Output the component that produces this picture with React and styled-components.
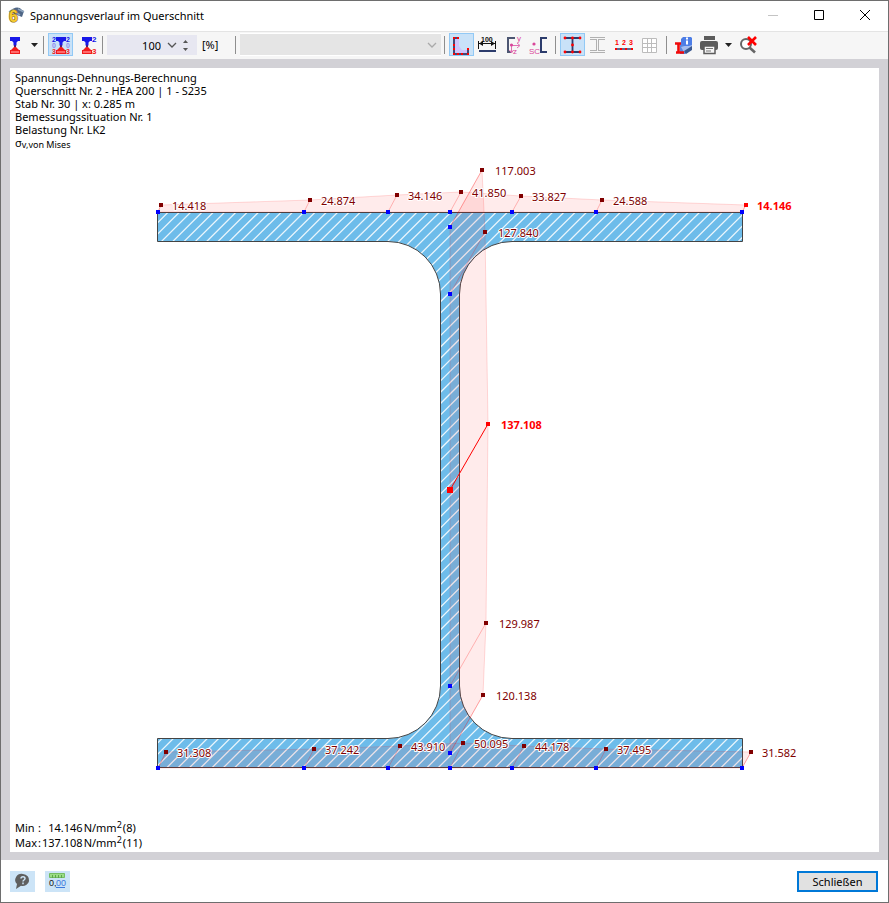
import React, { useState } from "react";
import styled, { createGlobalStyle } from "styled-components";

const topPoints = [
  { node: [158, 212], tip: [161, 205], value: "14.418", text: [172, 210] },
  { node: [304, 212], tip: [310, 200], value: "24.874", text: [321, 205] },
  { node: [388, 212], tip: [397, 195], value: "34.146", text: [408, 200] },
  { node: [450, 212], tip: [461, 192], value: "41.850", text: [472, 197] },
  { node: [512, 212], tip: [521, 196], value: "33.827", text: [532, 201] },
  { node: [596, 212], tip: [602, 200], value: "24.588", text: [613, 205] },
  {
    node: [742, 212],
    tip: [746, 205],
    value: "14.146",
    text: [757, 210],
    extreme: true,
  },
];

const webPoints = [
  { node: [450, 227], tip: [482, 170], value: "117.003", text: [495, 175] },
  { node: [450, 294], tip: [485, 232], value: "127.840", text: [498, 237] },
  {
    node: [450, 490],
    tip: [488, 424],
    value: "137.108",
    text: [501, 429],
    extreme: true,
    governing: true,
  },
  { node: [450, 686], tip: [486, 623], value: "129.987", text: [499, 628] },
  { node: [450, 753], tip: [483, 695], value: "120.138", text: [496, 700] },
];

const bottomPoints = [
  { node: [158, 768], tip: [166, 752], value: "31.308", text: [177, 757] },
  { node: [304, 768], tip: [314, 749], value: "37.242", text: [325, 754] },
  { node: [388, 768], tip: [400, 746], value: "43.910", text: [411, 751] },
  { node: [450, 768], tip: [463, 743], value: "50.095", text: [474, 748] },
  { node: [512, 768], tip: [524, 746], value: "44.178", text: [535, 751] },
  { node: [596, 768], tip: [606, 749], value: "37.495", text: [617, 754] },
  { node: [742, 768], tip: [751, 752], value: "31.582", text: [762, 757] },
];

const groups = [topPoints, webPoints, bottomPoints];
const allPoints = groups.flat();

const outline =
  "M157.5 212.5H742.5V241.5H512A52.5 52.5 0 0 0 459.5 294V686A52.5 52.5 0 0 0 512 738.5H742.5V767.5H157.5V738.5H388A52.5 52.5 0 0 0 440.5 686V294A52.5 52.5 0 0 0 388 241.5H157.5Z";

// every hatch line runs at 45 degrees, so x + y is constant along it
function hatchPath() {
  const step = 11.31;
  const lines = [];
  for (let sum = 369; sum < 1520; sum += step) {
    lines.push(`M${sum - 212} 212L${sum - 768} 768`);
  }
  return lines.join("");
}

const hatch = hatchPath();

function areaPath(points) {
  const tips = points.map((p) => p.tip.join(" "));
  const first = points[0].node.join(" ");
  const last = points[points.length - 1].node.join(" ");
  return `M${first}L${tips.join("L")}L${last}Z`;
}

function StressDiagram() {
  return (
    <Drawing
      viewBox="10 155 869 660"
      role="img"
      aria-label="Spannungsverlauf HEA 200"
    >
      <clipPath id="section">
        <path d={outline} />
      </clipPath>
      <path d={outline} fill="#6dbcea" />
      <path
        d={hatch}
        clipPath="url(#section)"
        stroke="#fff"
        strokeOpacity="0.85"
        strokeWidth="1.3"
      />
      <path d={outline} fill="none" stroke="#444" />
      {groups.map((points) => (
        <StressArea key={points[0].value} d={areaPath(points)} />
      ))}
      {allPoints.map((p) => (
        <Leader
          key={p.value}
          $governing={p.governing}
          d={`M${p.node.join(" ")}L${p.tip.join(" ")}`}
        />
      ))}
      {allPoints.map((p) => {
        const size = p.governing ? 6 : 4;
        return (
          <g key={p.value}>
            <rect
              x={p.node[0] - size / 2}
              y={p.node[1] - size / 2}
              width={size}
              height={size}
              fill={p.governing ? "#f00" : "#00f"}
            />
            <rect
              x={p.tip[0] - 2}
              y={p.tip[1] - 2}
              width="4"
              height="4"
              fill={p.extreme ? "#f00" : "#800000"}
            />
            <ValueLabel x={p.text[0]} y={p.text[1]} $extreme={p.extreme}>
              {p.value}
            </ValueLabel>
          </g>
        );
      })}
    </Drawing>
  );
}

function Icon({ children }) {
  return (
    <svg width="25" height="23" viewBox="0 0 25 23" aria-hidden="true">
      {children}
    </svg>
  );
}

function BeamShape({ x = 0 }) {
  return (
    <g transform={`translate(${x} 0)`}>
      <path d="M7 4h10v4h-2l-1.500 1.500v3h-3v-3L9 8H7z" fill="#1818e8" />
      <path d="M11 12h2v4h-2z" fill="#4b1f78" />
      <path d="M11 14h2l3 3h1v4H7v-4h1z" fill="#f01c1c" />
      <path d="M8 18h8v2H8z" fill="#ff6a6a" />
    </g>
  );
}

function SectionIcon() {
  return (
    <Icon>
      <BeamShape />
    </Icon>
  );
}

function AllStressIcon() {
  return (
    <Icon>
      <BeamShape x={1} />
      <IconText x="4" y="9" fill="#1414e6" $small>2</IconText>
      <IconText x="18" y="9" fill="#1414e6" $small>2</IconText>
      <IconText x="4" y="15" fill="#8f8fee" $small>0</IconText>
      <IconText x="18" y="15" fill="#8f8fee" $small>0</IconText>
      <IconText x="4" y="21" fill="#f22020" $small>3</IconText>
      <IconText x="18" y="21" fill="#f22020" $small>3</IconText>
    </Icon>
  );
}

function EndStressIcon() {
  return (
    <Icon>
      <BeamShape x={1} />
      <IconText x="18" y="9" fill="#1414e6">2</IconText>
      <IconText x="18" y="21" fill="#f22020">3</IconText>
    </Icon>
  );
}

function AngleIcon() {
  return (
    <Icon>
      <path d="M6 5h4v8l3 4h6v3H6z" fill="#cfc4fb" />
      <path d="M9 5H5v16h14v-5" fill="none" stroke="#454874" strokeWidth="2" />
      <path
        d="M4 4h2v2H4zM8 4h2v2H8zM4 11h2v2H4zM4 15h2v2H4zM4 20h2v2H4zM8 20h2v2H8zM12 20h2v2h-2zM18 20h2v2h-2zM18 15h2v2h-2z"
        fill="#f00"
      />
    </Icon>
  );
}

function DimensionIcon() {
  return (
    <Icon>
      <IconText x="6" y="9" fill="#111" $small>100</IconText>
      <path d="M3.500 8v8M20.500 8v8M4 10.500h16" stroke="#111" />
      <path d="M4 10.500l4-2.500v5zM20 10.500L16 8v5z" fill="#111" />
      <path d="M4 17h17v2H4z" fill="#2c3c6c" />
    </Icon>
  );
}

function AxesIcon() {
  return (
    <Icon>
      <path d="M14 5H7v14h3" fill="none" stroke="#4c5672" strokeWidth="2" />
      <path d="M10.500 12.500h8M10.500 12.500v7" fill="none" stroke="#e070b4" />
      <circle cx="10.500" cy="12" r="1.600" fill="#d9479a" />
      <path d="M16 10l3 2.500-3 2.500M8.500 17l2 3 2-3" fill="none" stroke="#e070b4" />
      <IconText x="16" y="8" fill="#d9479a" $light>y</IconText>
      <IconText x="12" y="21" fill="#d9479a" $light>z</IconText>
    </Icon>
  );
}

function ShearCentreIcon() {
  return (
    <Icon>
      <path d="M20 5h-6v14h6" fill="none" stroke="#2c3c6c" strokeWidth="2" />
      <circle cx="7" cy="11" r="1.600" fill="#d9479a" />
      <IconText x="2" y="21" fill="#d9479a" $light>SC</IconText>
    </Icon>
  );
}

function NodesIcon() {
  const dots = [
    [5, 5],
    [12.5, 5],
    [20, 5],
    [12.5, 12],
    [5, 19],
    [12.5, 19],
    [20, 19],
  ];
  return (
    <Icon>
      <path d="M5 5h15M5 19h15M12.500 5v14" stroke="#2c3c6c" strokeWidth="1.800" />
      {dots.map(([x, y]) => (
        <circle key={`${x}-${y}`} cx={x} cy={y} r="1.400" fill="#f00" />
      ))}
    </Icon>
  );
}

function OutlineIcon() {
  return (
    <Icon>
      <path
        d="M4 4.500h15M4 6.500h6M13 6.500h6M4 19.500h15M4 17.500h6M13 17.500h6M10.500 6v12M12.500 6v12"
        stroke="#a0a0a0"
        strokeWidth=".8"
        fill="none"
      />
    </Icon>
  );
}

function NumberingIcon() {
  return (
    <Icon>
      <IconText x="3" y="12" fill="#f00" $small>1</IconText>
      <IconText x="10" y="12" fill="#f00" $small>2</IconText>
      <IconText x="17" y="12" fill="#f00" $small>3</IconText>
      <path d="M4 16h17" stroke="#2c3c6c" strokeWidth="1.500" />
      <path d="M3 15h2v2H3zM8 15h2v2H8zM13 15h2v2h-2zM19 15h2v2h-2z" fill="#f00" />
    </Icon>
  );
}

function GridIcon() {
  return (
    <Icon>
      <path
        d="M4.500 5.500h14v14h-14zM4.500 10.500h14M4.500 14.500h14M9.500 5.500v14M13.500 5.500v14"
        fill="#fff"
        stroke="#bcbcbc"
      />
    </Icon>
  );
}

function InfoIcon() {
  return (
    <Icon>
      <path d="M9 10l12-5v11l-7 5H9z" fill="#5b85dc" />
      <path d="M10 14l11-3v4l-8 4z" fill="#a5bdf0" />
      <path d="M13 18l8-5v4l-6 4z" fill="#39588f" />
      <path d="M12 4h8l1 1v7l-3 1h-5l-3-3V6z" fill="#4c7de6" />
      <path d="M15 4.500h2v2h-2zM15 7.500h2v4h-2z" fill="#fff" />
      <path d="M4 10.500h6M5 19.500h8M7.500 10v9" stroke="#f00a0a" strokeWidth="2.600" />
    </Icon>
  );
}

function PrintIcon() {
  return (
    <Icon>
      <path d="M7 3h11v4H7z" fill="#5c5c5c" />
      <rect x="3" y="8" width="18" height="9" rx="2" fill="#5c5c5c" />
      <path d="M7 13h11v7.500H7z" fill="#f6f6f6" stroke="#5c5c5c" strokeWidth="1.500" />
      <path d="M9 15.500h7M9 18h5" stroke="#777" />
    </Icon>
  );
}

function ResetZoomIcon() {
  return (
    <Icon>
      <circle cx="11" cy="11" r="5" fill="#fff" stroke="#666" strokeWidth="2" />
      <path d="M14.500 14.500l5.500 5" stroke="#666" strokeWidth="2.600" />
      <path d="M13 4l8 8M21 4l-8 8" stroke="#f00" strokeWidth="2.600" />
    </Icon>
  );
}

function AppIcon() {
  return (
    <svg width="17" height="17" viewBox="0 0 17 17" aria-hidden="true">
      <path d="M2 5C5 0 11-1 14 3l2 1-2 6-5-2z" fill="#4f6686" />
      <path d="M1 5l5-3M10 2l6 3M7 5l5 3" stroke="#8da4bd" strokeWidth="1.500" />
      <LogoText x="1" y="15">
        6
      </LogoText>
    </svg>
  );
}

function Arrow() {
  return (
    <svg width="7" height="4" viewBox="0 0 7 4" aria-hidden="true">
      <path d="M0 0h7L3.500 4z" fill="#222" />
    </svg>
  );
}

function Chevron({ color }) {
  return (
    <svg width="10" height="6" viewBox="0 0 10 6" aria-hidden="true">
      <path d="M1 1l4 4 4-4" fill="none" stroke={color} strokeWidth="1.300" />
    </svg>
  );
}

function Tool({ label, active, onClick, children }) {
  return (
    <ToolButton
      type="button"
      aria-label={label}
      aria-pressed={active}
      $active={active}
      onClick={onClick}
    >
      {children}
    </ToolButton>
  );
}

function TitleBar() {
  return (
    <Header>
      <AppIcon />
      <Title>Spannungsverlauf im Querschnitt</Title>
      <WindowButton type="button" aria-label="Minimieren" disabled>
        <svg width="10" height="10" viewBox="0 0 10 10">
          <path d="M0 5.500h10" stroke="#c4c4c4" />
        </svg>
      </WindowButton>
      <WindowButton type="button" aria-label="Maximieren">
        <svg width="10" height="10" viewBox="0 0 10 10">
          <path d="M.5 .5h9v9h-9z" fill="none" stroke="#000" />
        </svg>
      </WindowButton>
      <WindowButton type="button" aria-label="Fenster schließen">
        <svg width="10" height="10" viewBox="0 0 10 10">
          <path d="M0 0l10 10M10 0L0 10" stroke="#000" />
        </svg>
      </WindowButton>
    </Header>
  );
}

function Toolbar() {
  const [scale, setScale] = useState(100);
  const [on, setOn] = useState({ all: true, angle: true, nodes: true });
  const toggle = (key) => setOn({ ...on, [key]: !on[key] });

  return (
    <Bar role="toolbar">
      <SplitTool>
        <Tool label="Querschnitt">
          <SectionIcon />
        </Tool>
        <ArrowButton type="button" aria-label="Querschnitt wählen">
          <Arrow />
        </ArrowButton>
      </SplitTool>
      <Separator />
      <Tool label="Alle Werte" active={on.all} onClick={() => toggle("all")}>
        <AllStressIcon />
      </Tool>
      <Tool label="Randwerte">
        <EndStressIcon />
      </Tool>
      <Separator />
      <SpinBox>
        <SpinInput
          aria-label="Skalierung"
          value={scale}
          onChange={(e) => setScale(Number(e.target.value) || 0)}
        />
        <SpinButton type="button" aria-label="Skalierung wählen">
          <Chevron color="#555" />
        </SpinButton>
        <SpinSteps>
          <StepButton
            type="button"
            aria-label="Mehr"
            onClick={() => setScale(scale + 1)}
          >
            <svg width="5" height="3" viewBox="0 0 5 3">
              <path d="M0 3h5L2.500 0z" fill="#555" />
            </svg>
          </StepButton>
          <StepButton
            type="button"
            aria-label="Weniger"
            onClick={() => setScale(scale - 1)}
          >
            <svg width="5" height="3" viewBox="0 0 5 3">
              <path d="M0 0h5L2.500 3z" fill="#555" />
            </svg>
          </StepButton>
        </SpinSteps>
      </SpinBox>
      <Unit>[%]</Unit>
      <Separator />
      <ComboBox>
        <Combo aria-label="Auswahl" disabled />
        <ComboArrow>
          <Chevron color="#aaa" />
        </ComboArrow>
      </ComboBox>
      <Separator />
      <Tool label="Verlauf" active={on.angle} onClick={() => toggle("angle")}>
        <AngleIcon />
      </Tool>
      <Tool label="Bemaßung">
        <DimensionIcon />
      </Tool>
      <Tool label="Hauptachsen">
        <AxesIcon />
      </Tool>
      <Tool label="Schubmittelpunkt">
        <ShearCentreIcon />
      </Tool>
      <Separator />
      <Tool
        label="Spannungspunkte"
        active={on.nodes}
        onClick={() => toggle("nodes")}
      >
        <NodesIcon />
      </Tool>
      <Tool label="Umriss">
        <OutlineIcon />
      </Tool>
      <Tool label="Nummerierung">
        <NumberingIcon />
      </Tool>
      <Tool label="Raster">
        <GridIcon />
      </Tool>
      <Separator />
      <Tool label="Querschnittswerte">
        <InfoIcon />
      </Tool>
      <SplitTool>
        <Tool label="Drucken">
          <PrintIcon />
        </Tool>
        <ArrowButton type="button" aria-label="Druckoptionen">
          <Arrow />
        </ArrowButton>
      </SplitTool>
      <Tool label="Ansicht zurücksetzen">
        <ResetZoomIcon />
      </Tool>
    </Bar>
  );
}

function ResultRow({ name, value, point }) {
  return (
    <tr>
      <th scope="row">{name}</th>
      <td>:</td>
      <Value>{value}</Value>
      <td>
        N/mm<sup>2</sup>
      </td>
      <td>({point})</td>
    </tr>
  );
}

export default function App() {
  return (
    <>
      <GlobalStyle />
      <Window>
        <TitleBar />
        <Toolbar />
        <Frame>
          <Paper>
            <Notes>
              <div>Spannungs-Dehnungs-Berechnung</div>
              <div>Querschnitt Nr. 2 - HEA 200 | 1 - S235</div>
              <div>Stab Nr. 30 | x: 0.285 m</div>
              <div>Bemessungssituation Nr. 1</div>
              <div>Belastung Nr. LK2</div>
              <div>
                σ<Index>v,von Mises</Index>
              </div>
            </Notes>
            <StressDiagram />
            <Results>
              <tbody>
                <ResultRow name="Min" value="14.146" point="8" />
                <ResultRow name="Max" value="137.108" point="11" />
              </tbody>
            </Results>
          </Paper>
        </Frame>
        <Footer>
          <FooterTool type="button" aria-label="Hilfe">
            <Icon>
              <path
                d="M13 3a6.500 6 0 1 1-2 11.800L6 18l1-5A6.500 6 0 0 1 13 3z"
                fill="#5f5f5f"
              />
              <path
                d="M11 7.500c0-2.500 4-2.500 4 0 0 1.500-2 1.500-2 3M13 11.500v1.800"
                fill="none"
                stroke="#cce4f7"
                strokeWidth="1.500"
              />
            </Icon>
          </FooterTool>
          <FooterTool type="button" aria-label="Einheiten">
            <Icon>
              <path d="M4.500 2.500h15v4h-15z" fill="#9bdc86" stroke="#74bd62" />
              <path d="M7.500 4v3M10.500 4v3M13.500 4v3M16.500 4v3" stroke="#5da64c" />
              <DigitText x="4" y="15" fill="#111">0,</DigitText>
              <DigitText x="11" y="15" fill="#3c78dc">00</DigitText>
              <path d="M11 16.500h9" stroke="#3c78dc" />
            </Icon>
          </FooterTool>
          <CloseButton type="button">Schließen</CloseButton>
        </Footer>
      </Window>
    </>
  );
}

const GlobalStyle = createGlobalStyle`
  * {
    box-sizing: border-box;
  }

  body {
    margin: 0;
    background: #fff;
    color: #000;
    font-family: "Noto Sans", "Open Sans", sans-serif;
    font-size: 11px;
  }

  button,
  input,
  select {
    margin: 0;
    padding: 0;
    border: 0;
    background: none;
    color: inherit;
    font: inherit;
  }
`;

const Window = styled.div`
  display: flex;
  flex-direction: column;
  height: 100vh;
  min-height: 480px;
  border: 1px solid #6e6e6e;
`;

const Header = styled.header`
  display: flex;
  align-items: center;
  height: 31px;
  padding: 0 0 2px 7px;
  border-bottom: 1px solid #e4e4e4;
`;

const Title = styled.h1`
  flex: 1;
  margin: 0 0 0 5px;
  font-size: 11px;
  font-weight: 400;
`;

const WindowButton = styled.button`
  display: flex;
  align-items: center;
  justify-content: center;
  width: 46px;
  height: 28px;
`;

const Bar = styled.div`
  display: flex;
  align-items: flex-start;
  gap: 1px;
  height: 27px;
  padding: 1px 2px;
  background: #f6f6f6;
`;

const ToolButton = styled.button`
  flex: none;
  width: 25px;
  height: 23px;
  background: ${(props) => (props.$active ? "#c9e2f8" : "transparent")};
  box-shadow: ${(props) =>
    props.$active ? "inset 0 0 0 1px #92c9f5" : "none"};

  svg {
    display: block;
  }
`;

const SplitTool = styled.div`
  display: flex;
`;

const ArrowButton = styled.button`
  display: flex;
  align-items: center;
  justify-content: center;
  width: 12px;
  height: 23px;
`;

const Separator = styled.div`
  flex: none;
  width: 1px;
  height: 18px;
  margin: 3px 3px 0 2px;
  background: #8e8e8e;
`;

const SpinBox = styled.div`
  display: flex;
  flex: none;
  width: 90px;
  height: 20px;
  margin-top: 2px;
  background: #e7e7f1;
`;

const SpinInput = styled.input`
  flex: 1;
  min-width: 0;
  text-align: right;
`;

const SpinButton = styled.button`
  display: flex;
  align-items: center;
  justify-content: center;
  width: 22px;
`;

const SpinSteps = styled.div`
  display: flex;
  flex-direction: column;
  justify-content: center;
  width: 14px;
`;

const StepButton = styled.button`
  display: flex;
  align-items: center;
  height: 8px;
`;

const Unit = styled.span`
  flex: none;
  width: 34px;
  padding-left: 4px;
  line-height: 23px;
`;

const ComboBox = styled.div`
  display: grid;
  flex: 0 1 201px;
  height: 23px;
  border: solid #fff;
  border-width: 1px 0;
`;

const Combo = styled.select`
  grid-area: 1 / 1;
  appearance: none;
  width: 100%;
  background: #e5e5e5;
  opacity: 1;
`;

const ComboArrow = styled.span`
  display: flex;
  grid-area: 1 / 1;
  align-items: center;
  justify-self: end;
  padding-right: 4px;
  pointer-events: none;
`;

const IconText = styled.text`
  font-family: "Liberation Sans", sans-serif;
  font-size: ${(props) => (props.$small ? "7px" : "8px")};
  font-weight: ${(props) => (props.$light ? 400 : 700)};
`;

const DigitText = styled.text`
  font-family: "Liberation Sans", sans-serif;
  font-size: 9px;
`;

const LogoText = styled.text`
  fill: #f6cb2e;
  stroke: #8b6a12;
  stroke-width: 1.2px;
  paint-order: stroke;
  font-family: "Liberation Sans", sans-serif;
  font-size: 16px;
  font-weight: 700;
`;

const Frame = styled.main`
  display: flex;
  flex: 1;
  min-height: 0;
  padding: 9px 9px 8px;
  background: #d2d1d6;
`;

const Paper = styled.section`
  display: flex;
  flex: 1;
  flex-direction: column;
  min-width: 0;
  background: #fff;
`;

const Notes = styled.div`
  height: 87px;
  padding: 3px 5px;
  line-height: 13px;
`;

const Index = styled.span`
  font-size: 9px;
  line-height: 1;
  vertical-align: -1px;
`;

const Drawing = styled.svg`
  flex: 1;
  width: 100%;
  min-height: 0;
`;

const StressArea = styled.path`
  fill: rgba(255, 0, 0, 0.08);
  stroke: rgba(255, 0, 0, 0.14);
`;

const Leader = styled.path`
  fill: none;
  stroke: ${(props) => (props.$governing ? "#f00" : "rgba(255, 0, 0, 0.25)")};
`;

const ValueLabel = styled.text`
  fill: ${(props) => (props.$extreme ? "#f00" : "#800000")};
  stroke: #fff;
  stroke-width: 2px;
  stroke-linejoin: round;
  paint-order: stroke;
  font-size: 11px;
  font-weight: ${(props) => (props.$extreme ? 700 : 400)};
`;

const Results = styled.table`
  align-self: flex-start;
  margin: 5px 5px 2px;
  border-spacing: 0;
  line-height: 15px;

  th,
  td {
    height: 15px;
    padding: 0 1px 0 0;
    font-weight: 400;
    text-align: left;
  }

  sup {
    font-size: 9px;
    line-height: 0;
    vertical-align: 4px;
  }
`;

const Value = styled.td`
  && {
    text-align: right;
  }
`;

const Footer = styled.footer`
  display: flex;
  align-items: center;
  gap: 10px;
  height: 42px;
  padding: 0 10px 0 9px;
`;

const FooterTool = styled.button`
  width: 25px;
  height: 21px;
  background: #cce4f7;

  svg {
    display: block;
  }
`;

const CloseButton = styled.button`
  width: 81px;
  height: 21px;
  margin-left: auto;
  border: 2px solid #0078d7;
  background: #e1e1e1;
`;
